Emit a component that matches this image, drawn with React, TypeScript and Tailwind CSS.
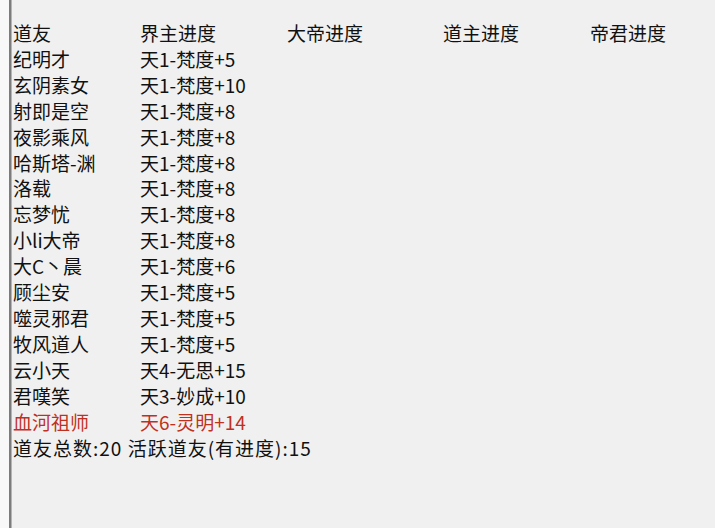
const rows: { name: string; jie: string; red?: boolean }[] = [
  { name: "纪明才", jie: "天1-梵度+5" },
  { name: "玄阴素女", jie: "天1-梵度+10" },
  { name: "射即是空", jie: "天1-梵度+8" },
  { name: "夜影乘风", jie: "天1-梵度+8" },
  { name: "哈斯塔-渊", jie: "天1-梵度+8" },
  { name: "洛载", jie: "天1-梵度+8" },
  { name: "忘梦忧", jie: "天1-梵度+8" },
  { name: "小li大帝", jie: "天1-梵度+8" },
  { name: "大C丶晨", jie: "天1-梵度+6" },
  { name: "顾尘安", jie: "天1-梵度+5" },
  { name: "噬灵邪君", jie: "天1-梵度+5" },
  { name: "牧风道人", jie: "天1-梵度+5" },
  { name: "云小天", jie: "天4-无思+15" },
  { name: "君嘆笑", jie: "天3-妙成+10" },
  { name: "血河祖师", jie: "天6-灵明+14", red: true },
]

const cols = "grid grid-cols-[127px_147px_156px_147px_1fr]"

export default function App() {
  return (
    <div className="flex h-[528px] w-[715px] overflow-hidden bg-[#f8f8f8]">
      <div className="w-[9px]" />
      <div className="w-[2px] bg-[#7c7c7c]" />
      <div className="w-[1px] bg-[#b4b4b4]" />
      <div
        className="flex-1 bg-[#f0f0f0] pl-[1px] pt-[20px] text-[19px] leading-[25.9px] text-[#111]"
        style={{ fontFamily: '"Noto Sans CJK SC", "Noto Sans", sans-serif' }}
      >
        <div className={cols}>
          <span>道友</span>
          <span>界主进度</span>
          <span>大帝进度</span>
          <span>道主进度</span>
          <span>帝君进度</span>
        </div>
        {rows.map((r) => (
          <div
            key={r.name}
            className={cols + (r.red ? " text-[#c0301f]" : "")}
          >
            <span className="whitespace-nowrap">{r.name}</span>
            <span className="whitespace-nowrap">{r.jie}</span>
            <span />
            <span />
            <span />
          </div>
        ))}
        <div className="whitespace-nowrap tracking-[1px]">
          道友总数:20 活跃道友(有进度):15
        </div>
      </div>
    </div>
  )
}
